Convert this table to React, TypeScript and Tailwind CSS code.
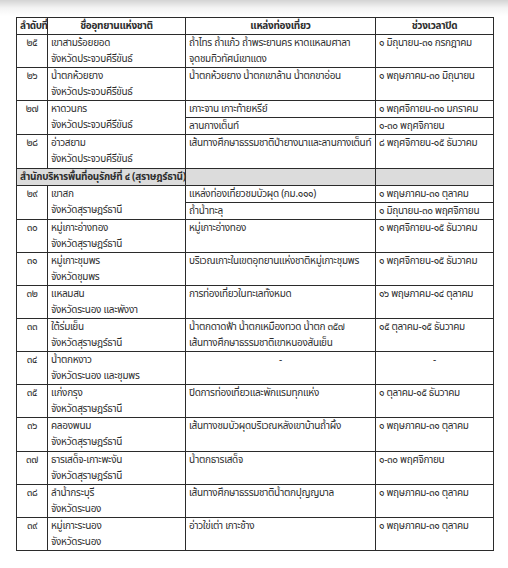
import React from 'react';

type Row = {
  no: string;
  park: string;
  province: string;
  spots: string[];
  close: string[];
  split?: boolean; // spots/close split into two bordered sub-cells
  h: number;
};

const rowsA: Row[] = [
  { no: '๒๕', park: 'เขาสามร้อยยอด', province: 'จังหวัดประจวบคีรีขันธ์', spots: ['ถ้ำไทร ถ้ำแก้ว ถ้ำพระยานคร หาดแหลมศาลา', 'จุดชมทิวทัศน์เขาแดง'], close: ['๑ มิถุนายน-๓๑ กรกฎาคม'], h: 32 },
  { no: '๒๖', park: 'น้ำตกห้วยยาง', province: 'จังหวัดประจวบคีรีขันธ์', spots: ['น้ำตกห้วยยาง น้ำตกเขาล้าน น้ำตกขาอ่อน'], close: ['๑ พฤษภาคม-๓๐ มิถุนายน'], h: 33 },
  { no: '๒๗', park: 'หาดวนกร', province: 'จังหวัดประจวบคีรีขันธ์', spots: ['เกาะจาน เกาะท้ายหรีย์', 'ลานกางเต็นท์'], close: ['๑ พฤศจิกายน-๓๑ มกราคม', '๑-๓๐ พฤศจิกายน'], split: true, h: 32 },
  { no: '๒๘', park: 'อ่าวสยาม', province: 'จังหวัดประจวบคีรีขันธ์', spots: ['เส้นทางศึกษาธรรมชาติป่ายางนาและลานกางเต็นท์'], close: ['๘ พฤศจิกายน-๑๕ ธันวาคม'], h: 34 },
];

const rowsB: Row[] = [
  { no: '๒๙', park: 'เขาสก', province: 'จังหวัดสุราษฎร์ธานี', spots: ['แหล่งท่องเที่ยวชมบัวผุด (กม.๑๑๑)', 'ถ้ำน้ำทะลุ'], close: ['๑ พฤษภาคม-๓๑ ตุลาคม', '๑ มิถุนายน-๓๐ พฤศจิกายน'], split: true, h: 32 },
  { no: '๓๐', park: 'หมู่เกาะอ่างทอง', province: 'จังหวัดสุราษฎร์ธานี', spots: ['หมู่เกาะอ่างทอง'], close: ['๑ พฤศจิกายน-๑๕ ธันวาคม'], h: 32 },
  { no: '๓๑', park: 'หมู่เกาะชุมพร', province: 'จังหวัดชุมพร', spots: ['บริเวณเกาะในเขตอุทยานแห่งชาติหมู่เกาะชุมพร'], close: ['๑ พฤศจิกายน-๑๕ ธันวาคม'], h: 33 },
  { no: '๓๒', park: 'แหลมสน', province: 'จังหวัดระนอง และพังงา', spots: ['การท่องเที่ยวในทะเลทั้งหมด'], close: ['๑๖ พฤษภาคม-๑๔ ตุลาคม'], h: 32 },
  { no: '๓๓', park: 'ใต้ร่มเย็น', province: 'จังหวัดสุราษฎร์ธานี', spots: ['น้ำตกดาดฟ้า น้ำตกเหมืองทวด น้ำตก ๓๕๗', 'เส้นทางศึกษาธรรมชาติเขาหนองสันเย็น'], close: ['๑๕ ตุลาคม-๑๕ ธันวาคม'], h: 32 },
  { no: '๓๔', park: 'น้ำตกหงาว', province: 'จังหวัดระนอง และชุมพร', spots: ['-'], close: ['-'], h: 33 },
  { no: '๓๕', park: 'แก่งกรุง', province: 'จังหวัดสุราษฎร์ธานี', spots: ['ปิดการท่องเที่ยวและพักแรมทุกแห่ง'], close: ['๑ ตุลาคม-๑๕ ธันวาคม'], h: 32 },
  { no: '๓๖', park: 'คลองพนม', province: 'จังหวัดสุราษฎร์ธานี', spots: ['เส้นทางชมบัวผุดบริเวณหลังเขาบ้านถ้ำผึ้ง'], close: ['๑ พฤษภาคม-๓๑ ตุลาคม'], h: 34 },
  { no: '๓๗', park: 'ธารเสด็จ-เกาะพะงัน', province: 'จังหวัดสุราษฎร์ธานี', spots: ['น้ำตกธารเสด็จ'], close: ['๑-๓๐ พฤศจิกายน'], h: 32 },
  { no: '๓๘', park: 'ลำน้ำกระบุรี', province: 'จังหวัดระนอง', spots: ['เส้นทางศึกษาธรรมชาติน้ำตกปุญญบาล'], close: ['๑ พฤษภาคม-๓๑ ตุลาคม'], h: 33 },
  { no: '๓๙', park: 'หมู่เกาะระนอง', province: 'จังหวัดระนอง', spots: ['อ่าวใข่เต่า เกาะช้าง'], close: ['๑ พฤษภาคม-๓๑ ตุลาคม'], h: 32 },
];

const cell = 'border border-[#2b2b2b] align-top px-[3px] py-0 leading-[16px]';

function Lines({ items }: { items: string[] }) {
  if (items.length === 1 && items[0] === '-') return <div className="text-center">-</div>;
  return (
    <>
      {items.map((t) => (
        <div key={t} className="whitespace-nowrap">{t}</div>
      ))}
    </>
  );
}

function DataRows({ row }: { row: Row }) {
  const nameCell = (
    <>
      <td rowSpan={row.split ? 2 : 1} className={`${cell} text-center`}>{row.no}</td>
      <td rowSpan={row.split ? 2 : 1} className={cell}>
        <div className="whitespace-nowrap">{row.park}</div>
        <div className="whitespace-nowrap">{row.province}</div>
      </td>
    </>
  );
  if (row.split) {
    const top = Math.floor(row.h / 2);
    return (
      <>
        <tr style={{ height: top }}>
          {nameCell}
          <td className={cell}><div className="whitespace-nowrap">{row.spots[0]}</div></td>
          <td className={cell}><div className="whitespace-nowrap">{row.close[0]}</div></td>
        </tr>
        <tr style={{ height: row.h - top }}>
          <td className={cell}><div className="whitespace-nowrap">{row.spots[1]}</div></td>
          <td className={cell}><div className="whitespace-nowrap">{row.close[1]}</div></td>
        </tr>
      </>
    );
  }
  return (
    <tr style={{ height: row.h }}>
      {nameCell}
      <td className={cell}><Lines items={row.spots} /></td>
      <td className={cell}><Lines items={row.close} /></td>
    </tr>
  );
}

export default function App() {
  return (
    <div className="w-[508px] h-[568px] overflow-hidden bg-[linear-gradient(to_bottom,#d4d4d4,#f4f4f4_8px,#ffffff_16px)] pt-[17px] pl-[16px] text-[#2e2e2e] text-[10px] tracking-[-0.3px] font-['Noto_Sans_Thai','Noto_Sans','DejaVu_Sans',sans-serif]">
      <table className="border-collapse table-fixed w-[477px] border-[1.5px] border-[#1f1f1f]">
        <colgroup>
          <col className="w-[31px]" />
          <col className="w-[138px]" />
          <col className="w-[190px]" />
          <col className="w-[118px]" />
        </colgroup>
        <thead>
          <tr className="h-[17px] font-bold">
            <th className={`${cell} text-center px-0 whitespace-nowrap tracking-[-0.5px]`}>ลำดับที่</th>
            <th className={`${cell} text-center`}>ชื่ออุทยานแห่งชาติ</th>
            <th className={`${cell} text-center`}>แหล่งท่องเที่ยว</th>
            <th className={`${cell} text-center`}>ช่วงเวลาปิด</th>
          </tr>
        </thead>
        <tbody>
          {rowsA.map((r) => (
            <DataRows key={r.no} row={r} />
          ))}
          <tr className="h-[16px] bg-[#dcdcdc]">
            <td colSpan={2} className={`${cell} font-bold whitespace-nowrap`}>สำนักบริหารพื้นที่อนุรักษ์ที่ ๔ (สุราษฎร์ธานี)</td>
            <td className={cell}></td>
            <td className={cell}></td>
          </tr>
          {rowsB.map((r) => (
            <DataRows key={r.no} row={r} />
          ))}
        </tbody>
      </table>
    </div>
  );
}
